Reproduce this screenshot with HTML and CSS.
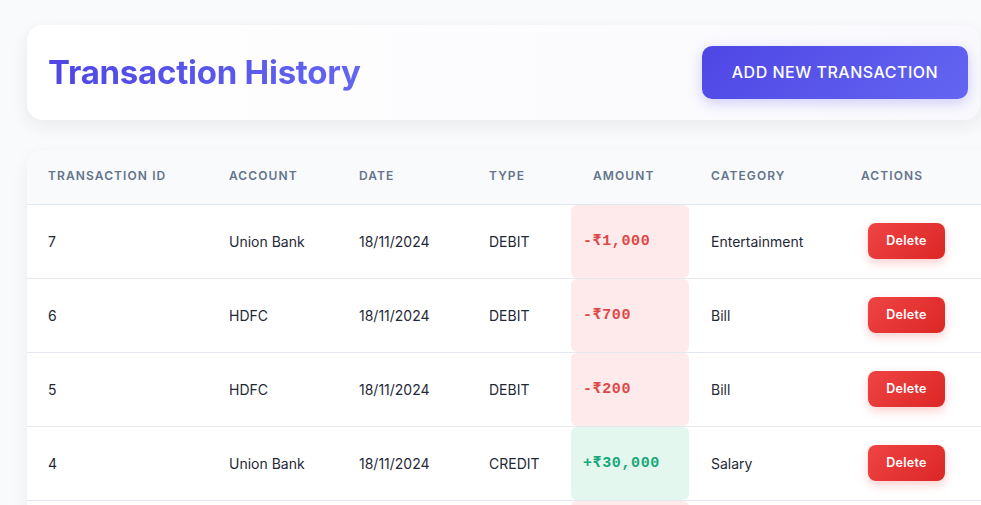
FILE: index.html
```html
<!DOCTYPE html>
<html lang="en">
<head>
<meta charset="utf-8">
<title>Transaction History</title>
<link rel="stylesheet" href="styles.css">
</head>
<body>
<main class="page">
  <header class="hero">
    <h1 class="title">Transaction History</h1>
    <button class="btn-add">ADD NEW TRANSACTION</button>
  </header>

  <section class="table-card">
    <div class="row head">
      <div class="cell">Transaction ID</div>
      <div class="cell">Account</div>
      <div class="cell">Date</div>
      <div class="cell">Type</div>
      <div class="cell amt-head">Amount</div>
      <div class="cell cat">Category</div>
      <div class="cell">Actions</div>
    </div>

    <div class="row">
      <div class="cell">7</div>
      <div class="cell">Union Bank</div>
      <div class="cell">18/11/2024</div>
      <div class="cell">DEBIT</div>
      <div class="cell amount debit">-₹1,000</div>
      <div class="cell cat">Entertainment</div>
      <div class="cell act"><button class="btn-del">Delete</button></div>
    </div>

    <div class="row">
      <div class="cell">6</div>
      <div class="cell">HDFC</div>
      <div class="cell">18/11/2024</div>
      <div class="cell">DEBIT</div>
      <div class="cell amount debit">-₹700</div>
      <div class="cell cat">Bill</div>
      <div class="cell act"><button class="btn-del">Delete</button></div>
    </div>

    <div class="row">
      <div class="cell">5</div>
      <div class="cell">HDFC</div>
      <div class="cell">18/11/2024</div>
      <div class="cell">DEBIT</div>
      <div class="cell amount debit">-₹200</div>
      <div class="cell cat">Bill</div>
      <div class="cell act"><button class="btn-del">Delete</button></div>
    </div>

    <div class="row">
      <div class="cell">4</div>
      <div class="cell">Union Bank</div>
      <div class="cell">18/11/2024</div>
      <div class="cell">CREDIT</div>
      <div class="cell amount credit">+₹30,000</div>
      <div class="cell cat">Salary</div>
      <div class="cell act"><button class="btn-del">Delete</button></div>
    </div>

    <div class="row">
      <div class="cell"></div>
      <div class="cell"></div>
      <div class="cell"></div>
      <div class="cell"></div>
      <div class="cell amount debit"></div>
      <div class="cell cat"></div>
      <div class="cell act"></div>
    </div>
  </section>
</main>
</body>
</html>
```

FILE: styles.css
```css
* { box-sizing: border-box; }

html, body {
  margin: 0;
  padding: 0;
}

body {
  background: #f9fafb;
  font-family: Inter, "Noto Sans", "Liberation Sans", sans-serif;
  color: #1f2937;
  overflow: hidden;
  height: 505px;
}

.page {
  padding: 25px 0 0 27px;
}

.hero {
  width: 953px;
  height: 95px;
  display: flex;
  align-items: center;
  justify-content: space-between;
  padding: 0 12px 0 21px;
  border-radius: 16px;
  background: linear-gradient(90deg, #ffffff 0%, #f9f9fd 100%);
  box-shadow: 0 6px 18px rgba(15, 23, 42, 0.07);
}

.title {
  margin: 0;
  font-size: 33px;
  font-weight: 700;
  letter-spacing: -0.25px;
  line-height: 1.2;
  background: linear-gradient(90deg, #4f46e5 0%, #6366f1 100%);
  -webkit-background-clip: text;
  background-clip: text;
  color: transparent;
}

.btn-add {
  width: 266px;
  height: 53px;
  border: none;
  border-radius: 10px;
  padding: 0 0 2px;
  background: linear-gradient(135deg, #4f46e5 0%, #6366f1 100%);
  color: #ffffff;
  font-family: Inter, "Noto Sans", sans-serif;
  font-size: 16px;
  font-weight: 500;
  letter-spacing: 0.5px;
  box-shadow: 0 4px 14px rgba(79, 70, 229, 0.25);
}

.table-card {
  margin-top: 30px;
  width: 1000px;
  background: #ffffff;
  border-radius: 16px 16px 0 0;
  overflow: hidden;
  box-shadow: 0 6px 18px rgba(15, 23, 42, 0.06);
}

.row {
  display: grid;
  grid-template-columns: 181px 130px 130px 103px 118px 151px 1fr;
  height: 74px;
  border-bottom: 1px solid #e5e9ef;
  align-items: center;
}

.row.head {
  height: 55px;
  background: #f8fafc;
  border-bottom: 1px solid #e2e8f0;
}

.head .cell {
  padding-bottom: 3px;
  font-size: 12px;
  font-weight: 600;
  letter-spacing: 1.1px;
  text-transform: uppercase;
  color: #64748b;
}

.cell {
  padding-left: 21px;
  font-size: 14px;
  white-space: nowrap;
}

.cell.cat { padding-left: 22px; }
.head .amt-head { padding-left: 22px; }

.amount {
  align-self: stretch;
  display: flex;
  align-items: center;
  padding-left: 12px;
  padding-bottom: 3px;
  border-radius: 6px;
  font-family: "Liberation Mono", "DejaVu Sans Mono", monospace;
  font-size: 15px;
  font-weight: 700;
  letter-spacing: 0.6px;
}

.amount.debit {
  background: #feeaea;
  color: #dc4848;
}

.amount.credit {
  background: #e3f7ef;
  color: #18a877;
}

.cell.act {
  padding-left: 28px;
  padding-bottom: 2px;
}

.btn-del {
  width: 77px;
  height: 36px;
  border: none;
  border-radius: 8px;
  background: linear-gradient(135deg, #ef4444 0%, #dc2626 100%);
  color: #ffffff;
  font-family: Inter, "Noto Sans", sans-serif;
  font-size: 12.5px;
  font-weight: 600;
  letter-spacing: 0.3px;
  box-shadow: 0 4px 10px rgba(239, 68, 68, 0.25);
}
```
